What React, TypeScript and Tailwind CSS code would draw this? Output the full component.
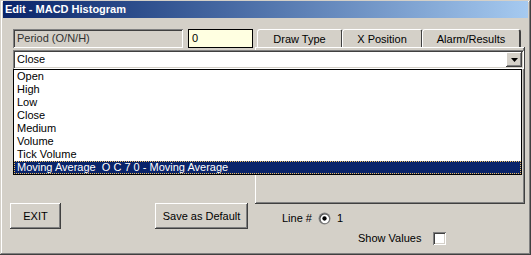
import React from 'react';

const raised =
  'shadow-[inset_-1px_-1px_#404040,inset_1px_1px_#ffffff,inset_-2px_-2px_#808080,inset_2px_2px_#d4d0c8]';
const sunken =
  'shadow-[inset_1px_1px_#808080,inset_-1px_-1px_#ffffff,inset_2px_2px_#404040,inset_-2px_-2px_#d4d0c8]';

function Tab({ label, width }: { label: string; width: string }) {
  return (
    <div
      className={`${width} h-[19px] -ml-px first:ml-0 flex items-center justify-center rounded-t-[3px] border-t border-l border-white border-r-2 border-r-[#404040] text-[11px] text-black`}
    >
      {label}
    </div>
  );
}

function Button({ label, width }: { label: string; width: string }) {
  return (
    <div className={`${width} h-[26px] flex items-center justify-center bg-[#d4d0c8] ${raised} text-[11px] text-black`}>
      {label}
    </div>
  );
}

export default function App() {
  const items = ['Open', 'High', 'Low', 'Close', 'Medium', 'Volume', 'Tick Volume'];

  return (
    <div
      className="relative w-[531px] h-[255px] bg-[#d4d0c8] overflow-hidden shadow-[inset_-1px_-1px_#404040,inset_1px_1px_#d4d0c8,inset_-2px_-2px_#808080,inset_2px_2px_#ffffff]"
      style={{ fontFamily: '"Liberation Sans", Arial, sans-serif' }}
    >
      {/* Title bar */}
      <div className="mx-[3px] mt-px h-[17px] flex items-center pl-[2px] bg-gradient-to-r from-[#0a246a] to-[#a6caf0]">
        <span className="text-[11px] font-bold text-white leading-none">Edit - MACD Histogram</span>
      </div>

      {/* Top row */}
      <div className="flex items-start mt-[11px] pl-[13px]">
        <div className={`w-[170px] h-[19px] flex items-center pl-[4px] ${sunken} text-[11px] text-[#303030]`}>
          Period (O/N/H)
        </div>
        <div className="ml-[5px] w-[65px] h-[19px] flex items-center pl-[3px] border border-black bg-[#ffffe1] text-[11px] text-black">
          0
        </div>
        <div className="ml-[4px] flex">
          <Tab label="Draw Type" width="w-[86px]" />
          <Tab label="X Position" width="w-[81px]" />
          <Tab label="Alarm/Results" width="w-[99px]" />
        </div>
      </div>

      {/* Main row */}
      <div className="flex items-start -mt-px pl-[3px]">
        <div className="w-[252px] pt-[156px] flex">
          <div className="ml-[7px]">
            <Button label="EXIT" width="w-[51px]" />
          </div>
          <div className="ml-[94px]">
            <Button label="Save as Default" width="w-[93px]" />
          </div>
        </div>
        <div className="w-[270px]">
          <div className={`h-[157px] ${raised}`}></div>
          <div className="flex items-center h-[14px] mt-[7px] ml-[27px] text-[11px] text-black">
            <span>Line #</span>
            <svg width="13" height="13" viewBox="0 0 12 12" className="ml-[6px]">
              <circle cx="6" cy="6" r="5.5" fill="#808080" />
              <circle cx="6" cy="6" r="4.5" fill="#404040" />
              <circle cx="6.3" cy="6.3" r="4" fill="#ffffff" />
              <circle cx="6" cy="6" r="2" fill="#000000" />
            </svg>
            <span className="ml-[6px]">1</span>
          </div>
          <div className="flex items-center h-[14px] mt-[6px] ml-[103px] text-[11px] text-black">
            <span>Show Values</span>
            <div className={`ml-[12px] w-[13px] h-[13px] bg-white ${sunken}`}></div>
          </div>
        </div>
      </div>

      {/* Open combo box with its drop-down list */}
      <div className="absolute left-[13px] top-[50px] w-[511px]">
        <div className={`h-[19px] bg-white ${sunken} flex items-center justify-between pl-[4px] pr-[2px] text-[11px] text-black`}>
          <span>Close</span>
          <div className={`w-[16px] h-[15px] bg-[#d4d0c8] ${raised} flex items-center justify-center`}>
            <svg width="7" height="4" viewBox="0 0 7 4">
              <path d="M0 0h7L3.5 4z" fill="#000" />
            </svg>
          </div>
        </div>
        <div className="w-[509px] border border-black bg-white text-[11px] text-black">
          {items.map((it) => (
            <div key={it} className="h-[13px] leading-[13px] pl-[3px]">
              {it}
            </div>
          ))}
          <div className="h-[13px] leading-[11px] pl-[2px] bg-[#0a246a] text-white border border-dotted border-[#f0c060]">
            Moving Average&nbsp; O C 7 0 - Moving Average
          </div>
        </div>
      </div>
    </div>
  );
}
